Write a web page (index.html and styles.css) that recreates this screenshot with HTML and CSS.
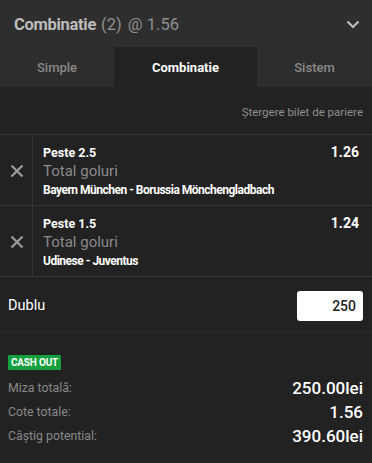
FILE: index.html
```html
<!DOCTYPE html>
<html lang="ro">
<head>
<meta charset="utf-8">
<link rel="stylesheet" href="styles.css">
</head>
<body>
<div class="slip">
  <header class="head">
    <div class="title"><b>Combinatie</b> <span class="cnt">(2)</span> <span class="odds">@ 1.56</span></div>
    <svg class="chev" width="14" height="9" viewBox="0 0 14 9"><path d="M1.5 1.5 L7 7 L12.5 1.5" fill="none" stroke="#bdbdbd" stroke-width="2.2"/></svg>
  </header>
  <nav class="tabs">
    <div class="tab">Simple</div>
    <div class="tab active">Combinatie</div>
    <div class="tab">Sistem</div>
  </nav>
  <div class="clear">Ştergere bilet de pariere</div>
  <div class="bet">
    <div class="rm"><svg width="14" height="14" viewBox="0 0 14 14"><path d="M1.5 1.5 L12.5 12.5 M12.5 1.5 L1.5 12.5" stroke="#9a9a9a" stroke-width="2.3"/></svg></div>
    <div class="info">
      <div class="top"><span class="sel">Peste 2.5</span><span class="price">1.26</span></div>
      <div class="market">Total goluri</div>
      <div class="event">Bayern München - Borussia Mönchengladbach</div>
    </div>
  </div>
  <div class="bet">
    <div class="rm"><svg width="14" height="14" viewBox="0 0 14 14"><path d="M1.5 1.5 L12.5 12.5 M12.5 1.5 L1.5 12.5" stroke="#9a9a9a" stroke-width="2.3"/></svg></div>
    <div class="info">
      <div class="top"><span class="sel">Peste 1.5</span><span class="price">1.24</span></div>
      <div class="market">Total goluri</div>
      <div class="event">Udinese - Juventus</div>
    </div>
  </div>
  <div class="stake">
    <span class="dublu">Dublu</span>
    <div class="input">250</div>
  </div>
  <div class="summary">
    <span class="cash">CASH OUT</span>
    <div class="row"><span class="lbl">Miza totală:</span><span class="val">250.00lei</span></div>
    <div class="row"><span class="lbl">Cote totale:</span><span class="val">1.56</span></div>
    <div class="row"><span class="lbl">Câştig potential:</span><span class="val">390.60lei</span></div>
  </div>
</div>
</body>
</html>
```
FILE: styles.css
```css
* { box-sizing: border-box; }
html, body { margin: 0; padding: 0; background: #222222; }
body { font-family: Roboto, "Liberation Sans", sans-serif; width: 372px; height: 463px; overflow: hidden; }
.slip { width: 372px; }
.head {
  height: 47px; background: #2e2e2e; display: flex; align-items: center;
  justify-content: space-between; padding: 0 12px 0 14px;
}
.title { font-size: 16.5px; color: #8e8e8e; padding-top: 1px; }
.title b { color: #bdbdbd; font-weight: 700; letter-spacing: -0.3px; }
.cnt { margin-left: 1px; }
.odds { margin-left: 2px; }
.chev { margin-top: 1px; }
.tabs { display: grid; grid-template-columns: 114px 143px 1fr; height: 40px; background: #2d2d2d; }
.tab { display: flex; align-items: center; justify-content: center; font-size: 13px; font-weight: 500; color: #8a8a8a; }
.tab.active { background: #222222; color: #ffffff; font-weight: 700; }
.clear {
  height: 48px; display: flex; align-items: center; justify-content: flex-end;
  padding: 2px 9px 0 0; font-size: 11.5px; color: #8f8f8f; border-bottom: 1px solid #343434;
}
.bet { display: flex; height: 71px; border-bottom: 1px solid #343434; }
.rm { width: 33px; border-right: 1px solid #343434; display: flex; align-items: center; justify-content: center; padding-left: 1px; padding-top: 1px; }
.info { flex: 1; padding: 9px 13px 0 10px; }
.top { display: flex; justify-content: space-between; align-items: baseline; height: 17px; }
.sel { font-size: 12.5px; font-weight: 700; color: #ffffff; }
.price { font-size: 14px; font-weight: 700; color: #ffffff; }
.market { font-size: 15px; color: #8a8a8a; line-height: 20px; margin-top: 0; }
.event { font-size: 12px; font-weight: 700; color: #ffffff; line-height: 16px; margin-top: 1px; letter-spacing: -0.5px; }
.stake {
  height: 56px; display: flex; align-items: center; justify-content: space-between;
  padding: 2px 9px 0 8px; border-bottom: 1px solid #2c2c2c;
}
.dublu { font-size: 14.5px; color: #ffffff; }
.input {
  width: 66px; height: 30px; background: #ffffff; border-radius: 3px;
  display: flex; align-items: center; justify-content: flex-end; padding-right: 7px;
  font-size: 14px; font-weight: 500; color: #222222;
}
.summary { padding: 18px 9px 0 8px; }
.cash {
  display: inline-block; background: #14a03c; color: #ffffff; font-size: 10px; font-weight: 700;
  padding: 2px 3px; line-height: 11px; border-radius: 1px; margin-bottom: 6px; letter-spacing: -0.2px;
}
.row { display: flex; justify-content: space-between; align-items: center; height: 24px; }
.lbl { font-size: 12.3px; color: #8a8a8a; }
.val { font-size: 17px; font-weight: 500; color: #ffffff; }
```
